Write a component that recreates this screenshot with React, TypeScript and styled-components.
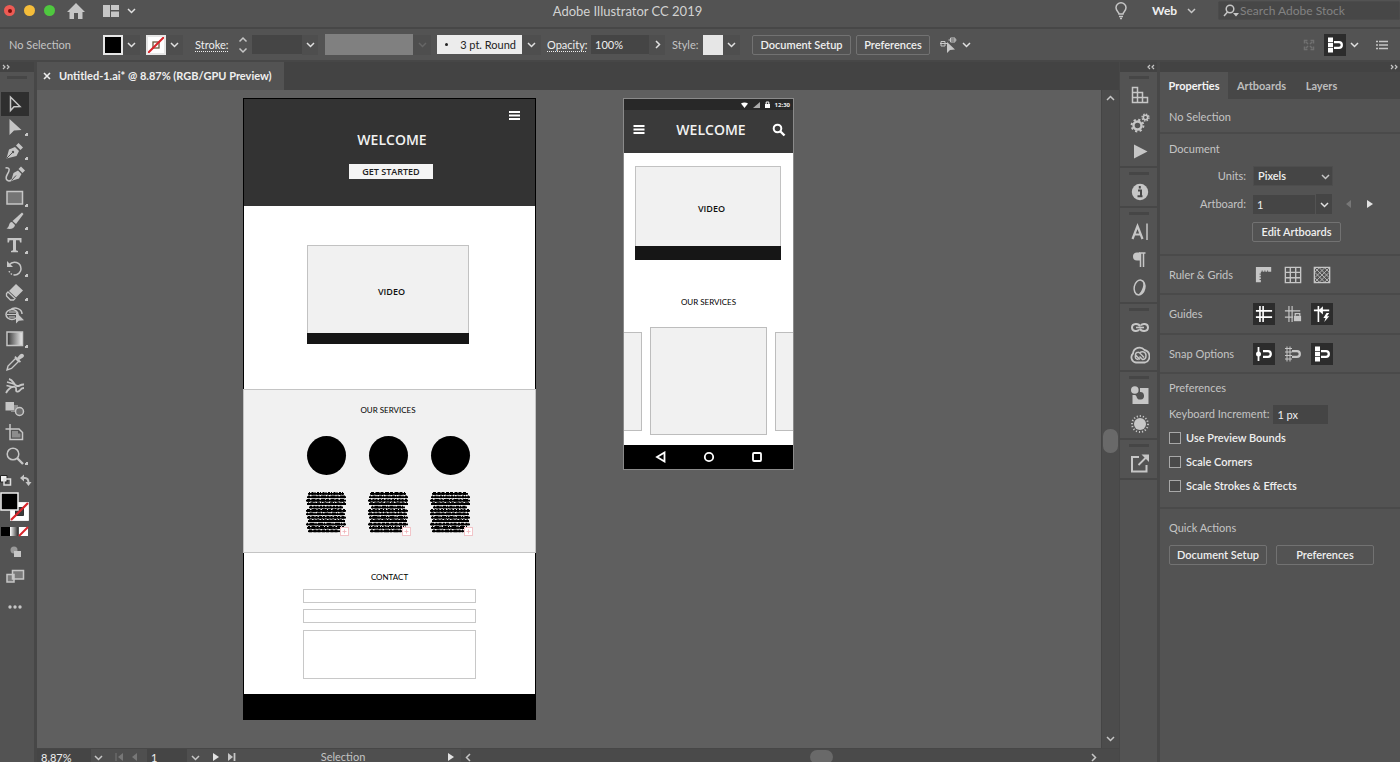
import React from "react";
import styled, { createGlobalStyle, css } from "styled-components";

const c = {
  panel: "#535353",
  dark: "#434343",
  canvas: "#5f5f5f",
  line: "#474747",
  field: "#454545",
  text: "#c4c4c4",
  bright: "#efefef",
  icon: "#c6c6c6",
};

const Global = createGlobalStyle`
  * { box-sizing: border-box; }
  body { margin: 0; background: ${c.panel}; overflow: hidden; }
  body, button, input, select, textarea { font-family: Lato, "Open Sans", sans-serif; font-size: 11px; line-height: 14px; color: ${c.text}; }
  button { padding: 0; border: 0; background: none; display: flex; align-items: center; justify-content: center; }
  input, select, textarea { margin: 0; padding: 0; border: 0; border-radius: 0; outline: 0; appearance: none; }
  h1, h2, h3 { margin: 0; font-weight: 400; }
`;

const Shell = styled.div`
  height: 100vh;
  display: flex;
  flex-direction: column;
  overflow: hidden;
`;

const TitleBar = styled.header`
  height: 29px;
  flex: none;
  display: flex;
  align-items: center;
  padding-bottom: 6px;
  border-bottom: 2px solid ${c.line};
`;
const TitleLeft = styled.div`
  width: 140px;
  display: flex;
  align-items: center;
  padding-left: 4px;
`;
const Light = styled.button<{ $color: string }>`
  width: 11px;
  height: 11px;
  flex: none;
  margin-right: 9px;
  border-radius: 50%;
  background: ${(p) => p.$color};
`;
const Dot = styled.span`
  width: 4px;
  height: 4px;
  border-radius: 50%;
  background: #7a0d0a;
`;
const Home = styled.button`
  margin: 0 16px 0 2px;
`;
const Title = styled.h1`
  flex: 1;
  text-align: center;
  font-size: 13px;
  line-height: 16px;
  color: #d2d2d2;
`;
const TitleRight = styled.div`
  width: 285px;
  display: flex;
  align-items: center;
`;
const Workspace = styled.button`
  margin-left: 25px;
  width: 44px;
  justify-content: space-between;
  font-size: 12px;
  font-weight: 700;
  color: ${c.bright};
`;
const Search = styled.label`
  margin-left: 22px;
  flex: 1;
  height: 19px;
  display: flex;
  align-items: center;
  gap: 1px;
  padding-left: 4px;
  border-radius: 2px;
  background: #474747;
  border: 1px solid #4b4b4b;
  input {
    background: none;
    width: 150px;
    font-size: 12px;
    &::placeholder { color: #828282; opacity: 1; }
  }
`;

const Svg = styled.svg`
  display: block;
  flex: none;
  fill: none;
  stroke: currentColor;
  color: ${c.icon};
`;

const ControlBar = styled.div`
  height: 33px;
  flex: none;
  display: flex;
  align-items: center;
  padding: 0 12px 0 9px;
  border-bottom: 2px solid ${c.line};
`;
const Cell = styled.span<{ $w: number; $link?: boolean }>`
  width: ${(p) => p.$w}px;
  flex: none;
  white-space: nowrap;
  ${(p) => p.$link && css`
    color: ${c.bright};
    text-decoration: underline dotted;
    text-underline-offset: 2px;
  `}
`;
const Swatch = styled.button<{ $bg: string }>`
  width: 20px;
  height: 20px;
  flex: none;
  border: 2px solid #e6e6e6;
  background: ${(p) => p.$bg};
`;
const Drop = styled.button<{ $w?: number; $dim?: boolean; $bg?: string }>`
  width: ${(p) => p.$w || 18}px;
  height: 20px;
  flex: none;
  background: ${(p) => p.$bg || "#4e4e4e"};
  svg { color: ${(p) => (p.$dim ? "#666" : "#e0e0e0")}; }
`;
const Field = styled.input<{ $w: number }>`
  width: ${(p) => p.$w}px;
  height: 19px;
  flex: none;
  padding-left: 4px;
  background: ${c.field};
  color: ${c.bright};
`;
const Profile = styled.span`
  width: 88px;
  height: 21px;
  flex: none;
  background: #808080;
`;
const Brush = styled.button`
  width: 85px;
  height: 19px;
  flex: none;
  background: #ececec;
  color: #222;
  justify-content: space-between;
  padding: 0 6px 0 8px;
`;
const Tip = styled.span`
  width: 3px;
  height: 3px;
  border-radius: 50%;
  background: #222;
`;
const Outline = styled.button<{ $w: number }>`
  width: ${(p) => p.$w}px;
  height: 20px;
  flex: none;
  border: 1px solid #727272;
  border-radius: 2px;
  font-weight: 600;
  color: ${c.bright};
  white-space: nowrap;
`;
const Right = styled.div`
  margin-left: auto;
  display: flex;
  align-items: center;
`;
const Toggle = styled.button<{ $on?: boolean }>`
  width: 22px;
  height: 22px;
  flex: none;
  background: ${(p) => (p.$on ? "#2c2c2c" : "transparent")};
  svg { color: ${(p) => (p.$on ? "#fff" : c.icon)}; }
`;

const Body = styled.div`
  flex: 1;
  min-height: 0;
  display: flex;
`;
const ToolColumn = styled.aside`
  width: 37px;
  flex: none;
  display: flex;
  flex-direction: column;
  background: ${c.panel};
  border-right: 3px solid ${c.line};
`;
const Strip = styled.div<{ $end?: boolean }>`
  height: 10px;
  flex: none;
  display: flex;
  align-items: center;
  justify-content: ${(p) => (p.$end ? "flex-end" : "flex-start")};
  padding: 0 2px;
  background: ${c.dark};
`;
const Grip = styled.div`
  height: 10px;
  width: 20px;
  margin: 0 auto;
  display: flex;
  align-items: center;
  &::before { content: ""; flex: 1; height: 3px; background: #464646; }
`;
const Tools = styled.div`
  height: 376px;
  margin: 10px 0 6px;
  display: grid;
  grid-auto-rows: 1fr;
`;
const Tool = styled.button<{ $on?: boolean }>`
  width: 28px;
  margin-left: 1px;
  background: ${(p) => (p.$on ? "#2f2f2f" : "none")};
`;
const MoreMark = styled.span`
  width: 3px;
  height: 3px;
  align-self: flex-end;
  margin: 0 -3px 3px 0;
  background: linear-gradient(135deg, transparent 30%, #c6c6c6 30%);
`;
const ColorBlock = styled.div`
  width: 33px;
  display: flex;
  flex-direction: column;
  align-items: center;
`;

const Main = styled.main`
  flex: 1;
  min-width: 0;
  display: flex;
  flex-direction: column;
`;
const TabBar = styled.div`
  height: 28px;
  flex: none;
  background: ${c.dark};
  display: flex;
`;
const DocTab = styled.button`
  width: 247px;
  background: ${c.panel};
  color: ${c.bright};
  font-weight: 700;
  justify-content: flex-start;
  gap: 8px;
  padding-left: 6px;
  white-space: nowrap;
`;
const View = styled.div`
  flex: 1;
  min-height: 0;
  display: flex;
`;
const Canvas = styled.div`
  flex: 1;
  position: relative;
  overflow: hidden;
  background: ${c.canvas};
`;
const VScroll = styled.div`
  width: 18px;
  flex: none;
  display: flex;
  flex-direction: column;
  align-items: center;
  padding: 4px 1px 5px;
  background: #4c4c4c;
  border-left: 1px solid #454545;
`;
const Thumb = styled.span<{ $w: number; $h: number }>`
  width: ${(p) => p.$w}px;
  height: ${(p) => p.$h}px;
  border-radius: 7px;
  background: #696969;
`;
const Space = styled.span<{ $n: number }>`
  flex: ${(p) => p.$n};
`;
const StatusBar = styled.footer`
  height: 14px;
  flex: none;
  display: flex;
  overflow: hidden;
  background: #4f4f4f;
  border-top: 1px solid #474747;
  > * { height: 16px; flex: none; }
`;
const StatusCell = styled.span<{ $w: number }>`
  width: ${(p) => p.$w}px;
  display: flex;
  align-items: center;
  justify-content: center;
  gap: 8px;
`;
const HScroll = styled.div`
  && { flex: 1; }
  display: flex;
  align-items: center;
  padding: 0 21px 0 3px;
  background: #4a4a4a;
`;

const Web = styled.section`
  position: absolute;
  left: 206px;
  top: 8px;
  width: 293px;
  background: #fff;
  border: 1px solid #000;
  display: flex;
  flex-direction: column;
  color: #111;
`;
const Hero = styled.div`
  height: 107px;
  background: #333;
  display: flex;
  flex-direction: column;
  align-items: center;
  padding: 12px 15px 0;
`;
const BurgerRight = styled.div`
  align-self: flex-end;
  height: 19px;
`;
const Welcome = styled.h2`
  font: 600 14px/20px "Open Sans", sans-serif;
  color: #f2f2f2;
  margin-left: 5px;
`;
const Start = styled.button`
  width: 84px;
  height: 15px;
  margin: 14px 0 0 3px;
  background: #f4f4f4;
  color: #222;
  font: 600 9px/12px "Open Sans", sans-serif;
`;
const WebVideo = styled.div`
  height: 183px;
  padding: 39px 66px 0 63px;
`;
const Video = styled.div<{ $h: number }>`
  height: ${(p) => p.$h}px;
  border: 1px solid #c2c2c2;
  border-bottom: 0;
  background: #f1f1f1;
  display: flex;
  align-items: center;
  justify-content: center;
  padding: 5px 0 0 7px;
  font: 600 9px/12px "Open Sans", sans-serif;
  color: #111;
`;
const VideoBar = styled.div<{ $h: number }>`
  height: ${(p) => p.$h}px;
  background: #161616;
`;
const Services = styled.div`
  height: 164px;
  margin: 0 -1px;
  background: #f1f1f1;
  border: 1px solid #c4c4c4;
  padding: 14px 66px 0 63px;
`;
const Small = styled.h3`
  font: 400 8px/12px Lato, sans-serif;
  text-align: center;
  color: #000;
`;
const Cols = styled.div`
  display: flex;
  justify-content: space-between;
  margin: 20px -4px 0;
`;
const Col = styled.div`
  display: flex;
  flex-direction: column;
  align-items: center;
  gap: 17px;
`;
const Circle = styled.span`
  width: 39px;
  height: 39px;
  border-radius: 50%;
  background: #000;
`;
const Form = styled.div`
  height: 141px;
  padding: 18px 59px 0;
  display: flex;
  flex-direction: column;
  input, textarea { border: 1px solid #c8c8c8; height: 14px; background: #fff; margin-top: 6px; resize: none; flex: none; }
  textarea { height: 49px; margin-top: 7px; }
`;
const WebFoot = styled.div`
  height: 25px;
  background: #000;
`;

const Phone = styled.section`
  position: absolute;
  left: 586px;
  top: 8px;
  width: 171px;
  border: 1px solid #8a8a8a;
  background: #fff;
  overflow: hidden;
`;
const PhoneStatus = styled.div`
  height: 11px;
  background: #282828;
  display: flex;
  align-items: center;
  justify-content: flex-end;
  gap: 5px;
  padding-right: 3px;
  font: 700 6px/10px "Open Sans", sans-serif;
  color: #eee;
`;
const PhoneHead = styled.div`
  height: 43px;
  background: #3a3a3a;
  display: flex;
  align-items: center;
  justify-content: space-between;
  padding: 0 7px 4px 9px;
`;
const PhoneVideo = styled.div`
  padding: 13px 12px 36px 11px;
`;
const Cards = styled.div`
  display: flex;
  align-items: center;
  justify-content: space-between;
  margin-top: 19px;
`;
const Card = styled.div<{ $w: number; $h: number; $side?: "left" | "right" }>`
  width: ${(p) => p.$w}px;
  height: ${(p) => p.$h}px;
  border: 1px solid #bdbdbd;
  background: #f1f1f1;
  ${(p) => p.$side === "left" && "border-left: 0;"}
  ${(p) => p.$side === "right" && "border-right: 0;"}
`;
const PhoneNav = styled.div`
  margin-top: 10px;
  height: 24px;
  background: #000;
  display: flex;
  align-items: center;
  justify-content: center;
  gap: 36px;
  svg { color: #fff; }
`;

const Dock = styled.aside`
  width: 38px;
  flex: none;
  display: flex;
  flex-direction: column;
  border-left: 1px solid ${c.line};
  background: ${c.panel};
`;
const DockGroup = styled.div`
  border-bottom: 2px solid ${c.line};
  display: flex;
  flex-direction: column;
`;
const DockButton = styled.button`
  height: 28px;
  padding: 0 0 2px 2px;
`;

const Props = styled.aside`
  width: 243px;
  flex: none;
  border-left: 3px solid ${c.line};
  background: ${c.panel};
`;
const PropTabs = styled.div`
  display: flex;
  height: 27px;
  background: #474747;
`;
const PropTab = styled.button<{ $w: number; $on?: boolean }>`
  width: ${(p) => p.$w}px;
  font-weight: 700;
  background: ${(p) => (p.$on ? c.panel : "none")};
  color: ${(p) => (p.$on ? "#f4f4f4" : "#bdbdbd")};
`;
const Section = styled.section<{ $h: number; $last?: boolean }>`
  height: ${(p) => p.$h}px;
  padding: 0 10px 0 9px;
  border-bottom: ${(p) => (p.$last ? 0 : "2px solid #4a4a4a")};
`;
const Row = styled.div<{ $h: number }>`
  height: ${(p) => p.$h}px;
  display: flex;
  align-items: center;
`;
const Label = styled.label`
  width: 77px;
  margin-right: 7px;
  text-align: right;
`;
const PropName = styled.h2`
  width: 84px;
  font-size: 11px;
`;
const SelectWrap = styled.span`
  width: 80px;
  height: 20px;
  display: grid;
  align-items: center;
  background: ${c.field};
  border: 1px solid #4d4d4d;
  > * { grid-area: 1 / 1; }
  select { background: none; color: ${c.bright}; font-weight: 600; padding-left: 4px; }
  svg { justify-self: end; margin-right: 2px; pointer-events: none; }
`;
const Toggles = styled.div`
  display: flex;
  gap: 7px;
`;
const Check = styled.label`
  height: 24px;
  display: flex;
  align-items: center;
  gap: 5px;
  color: ${c.bright};
  font-weight: 600;
  input { width: 12px; height: 12px; border: 1px solid #a8a8a8; background: #4a4a4a; }
`;

const F = { fill: "currentColor", stroke: "none" };

const Chev = ({ dir = "down" }: { dir?: "down" | "up" | "left" | "right" }) => {
  const d = {
    down: "M1 3L4.500 6.500L8 3",
    up: "M1 6L4.500 2.500L8 6",
    left: "M6 1L2.500 4.500L6 8",
    right: "M3 1L6.500 4.500L3 8",
  }[dir];
  return <Svg width="9" height="9" viewBox="0 0 9 9" strokeWidth="1.500"><path d={d} /></Svg>;
};

const Play = ({ left, dim }: { left?: boolean; dim?: boolean }) => (
  <Svg width="6" height="8" viewBox="0 0 6 8"><path d={left ? "M5 0V8L0 4z" : "M0 0V8L6 4z"} fill={dim ? "#777" : "#e2e2e2"} stroke="none" /></Svg>
);

const Stepper = () => (
  <Svg width="10" height="18" viewBox="0 0 10 18" strokeWidth="1.500">
    <path d="M1.500 5.500L5 2L8.500 5.500M1.500 12.500L5 16L8.500 12.500" />
  </Svg>
);

const Double = ({ left }: { left?: boolean }) => (
  <Svg width="8" height="6" viewBox="0 0 8 6" strokeWidth="1.200">
    <path d={left ? "M3 1L1 3L3 5M7 1L5 3L7 5" : "M1 1L3 3L1 5M5 1L7 3L5 5"} />
  </Svg>
);

const Icon = ({ children, size = 20 }: { children: React.ReactNode; size?: number }) => (
  <Svg width={size} height={size} viewBox="0 0 20 20" strokeWidth="1.500">{children}</Svg>
);

const tools: { name: string; more?: boolean; art: React.ReactNode }[] = [
  { name: "Selection", art: <path d="M5.500 3V16.500L9 12.800L15 12.500z" /> },
  { name: "Direct selection", more: true, art: <path d="M4.500 2V18L9 13.500L16.500 13z" {...F} /> },
  { name: "Pen", more: true, art: <><path d="M1.500 17.500L4 8.500L10 6L14 10L11.500 15z" {...F} /><path d="M11 4.500L13.500 2L18 6.500L15.500 9z" {...F} /><path d="M2 17L7.500 11.500" stroke="#535353" strokeWidth="1" /><circle cx="8" cy="11" r="1.200" fill="#535353" stroke="none" /></> },
  { name: "Curvature", art: <><path d="M6 17L8.500 9L13 6.500L16.500 10L14 14.500z" {...F} /><path d="M13.500 5L16 2.500L20 6.500L17.500 9z" {...F} /><path d="M0.500 4C5.500 3 4.500 7 2.500 10C-0.500 15 2 18.500 7 16" strokeWidth="1.500" /><path d="M6.500 16.500L11 11.500" stroke="#535353" strokeWidth="1" /></> },
  { name: "Rectangle", more: true, art: <rect x="2" y="3.500" width="15.500" height="12.500" fill="#757575" /> },
  { name: "Paintbrush", more: true, art: <><path d="M17 1.500L18.500 3L11 13L7.500 10z" {...F} /><path d="M1.500 17.500C5 16 3 11.500 7 11L10 14C9.500 18 5 18.500 1.500 17.500z" {...F} /></> },
  { name: "Type", more: true, art: <path d="M2.500 3H16.500V7.500H15L14.500 5.200H11V15.300L13 16V17.200H6V16L8 15.300V5.200H4.500L4 7.500H2.500z" {...F} /> },
  { name: "Rotate", more: true, art: <><path d="M4 7C8 2 16 4 16 11C16 14 13 17 10 17" /><path d="M2 3V9H8z" {...F} /><path d="M10 17C7 17 4 15 4 12" strokeDasharray="1.500 1.500" /></> },
  { name: "Eraser", more: true, art: <><path d="M11 2L18 8.500L11 15.500L4 9z" {...F} /><path d="M3 10L10 16.500L8.500 18H5.500L1.500 14V11.500z" strokeWidth="1.300" /></> },
  { name: "Shape builder", art: <><ellipse cx="7" cy="9.500" rx="6" ry="5" /><path d="M5 5C10 1 17 4 17 9" /><path d="M2 9.500H13M4 12H10M4 7H12" strokeWidth="1" /><path d="M11 7V18.500L13.800 15.800L19 15.300z" {...F} /></> },
  { name: "Gradient", more: true, art: <><defs><linearGradient id="tg"><stop offset="0" stopColor="#333" /><stop offset="1" stopColor="#eee" /></linearGradient></defs><rect x="2" y="3" width="15.500" height="13.500" fill="url(#tg)" /></> },
  { name: "Eyedropper", art: <><path d="M2 18L3 14L10.500 6.500L13.500 9.500L6.500 16.500z" strokeWidth="1.400" /><path d="M10.500 4L16 9.500L14.800 10.700L9.300 5.200z" {...F} /><path d="M12 6L15 2.500Q17 1 18.500 2.500T18 5.500L14 8z" {...F} /></> },
  { name: "Symbol sprayer", art: <><path d="M1 17C4 12 7 10 10 11C13 12 9 16 13 15.500C16 15 15 12 19 12" strokeWidth="1.800" /><path d="M4 3C9 4 8 9 12 10C15 10.500 15 8 19 8.500" strokeWidth="2" /><path d="M2 6L9 8M1.500 9.500L8 11" strokeWidth="1.500" /></> },
  { name: "Blend", art: <><rect x="0.500" y="3" width="8.500" height="8.500" {...F} /><path d="M9 6H13V13H6V11.500H9z" fill="#8f8f8f" stroke="none" /><circle cx="14.500" cy="12.500" r="4" fill="#6c6c6c" /></> },
  { name: "Artboard", art: <><path d="M5 1V16.500H17.500V9.500L14 6H0.500" /><path d="M7 8H13V10.500H15.500V14.500H7z" fill="#8c8c8c" stroke="none" /></> },
  { name: "Zoom", more: true, art: <><circle cx="8" cy="8" r="5.800" /><path d="M12 12L18 18" strokeWidth="2.400" /></> },
];

const dock: { name: string; art: React.ReactNode }[][] = [
  [
    { name: "Swatches", art: <path d="M2.500 2.500H7.500V17.500H2.500zM2.500 7.500H12.500V17.500M2.500 12.500H17.500V17.500H2.500" /> },
    { name: "Actions settings", art: <><circle cx="7.500" cy="12.500" r="4" strokeWidth="2.400" /><circle cx="7.500" cy="12.500" r="5.900" strokeDasharray="2.200 2.430" strokeWidth="2" /><circle cx="15.500" cy="4.500" r="2.200" strokeWidth="1.600" /><circle cx="15.500" cy="4.500" r="3.500" strokeDasharray="1.500 1.250" strokeWidth="1.300" /></> },
    { name: "Actions", art: <path d="M4 3.500V17.500L17.500 10.500z" {...F} /> },
  ],
  [{ name: "Info", art: <><circle cx="10" cy="11" r="8.200" {...F} /><path d="M8 9.500H11V15M7.500 15.300H12.500M9.800 5V7.500" stroke="#484848" strokeWidth="2" /></> }],
  [
    { name: "Character", art: <><path d="M2.500 18L7.500 5L12.500 18M4.500 13.500H10.500" strokeWidth="2.200" /><path d="M17 2.500V19" strokeWidth="1.500" /></> },
    { name: "Paragraph", art: <><path d="M10 3.500H7A4 4 0 0 0 7 11.500H10z" {...F} /><path d="M10.500 3.500V18M13.500 3.500V18M9 4H15.500" strokeWidth="1.500" /></> },
    { name: "OpenType", art: <><ellipse cx="9.500" cy="10.500" rx="5.300" ry="7.500" transform="rotate(12 9.500 10.500)" strokeWidth="1.500" /><path d="M11 3.500C16 5 12 15 8 18C15 18 18 6 11 3.500z" {...F} /></> },
  ],
  [
    { name: "Links", art: <><path d="M9 12.500C8 14.500 2 15 2 10.500C2 6 9 6 10 9.500M11 8.500C12 6.500 18 6 18 10.500C18 15 11 15 10 11.500" strokeWidth="2" /><path d="M6 10.500H14" strokeWidth="1.600" /></> },
    { name: "Libraries", art: <><path d="M6 17.500A5.300 5.300 0 0 1 3 8.500A6.500 6.500 0 0 1 14.500 5A6.500 6.500 0 0 1 15 17.500z" strokeWidth="1.800" /><path d="M10 14.500L5.500 10A2.500 2.500 0 0 1 8 7.200Q9.500 7 14 12.500M5.500 10Q4.500 14.500 8.500 14.500M9.500 8.500C11 5.500 16 6.500 16 10.500Q16 14.500 12.500 14.500L9.500 11.500" strokeWidth="1.500" /></> },
  ],
  [
    { name: "Color", art: <><circle cx="4.800" cy="5" r="3.800" {...F} /><path d="M10 3H18.500V19H2.500V10H5Q6 10 6.500 11.500A3.800 3.800 0 1 0 10 7z" {...F} /></> },
    { name: "Appearance", art: <><circle cx="10" cy="11" r="6" {...F} /><circle cx="10" cy="11" r="8" strokeDasharray="1.200 1.900" strokeWidth="1.800" /></> },
  ],
  [{ name: "Asset export", art: <><path d="M9 4H2V18.500H16.500V12" strokeWidth="2" /><path d="M8.500 12L16 4.500" strokeWidth="1.800" /><path d="M11.500 1.500H19V9z" {...F} /></> }],
];

const Magnet = ({ kind }: { kind: "point" | "grid" | "pixel" }) => (
  <Icon>
    {kind === "point" && <><path d="M4.500 3V17" strokeWidth="1.800" /><circle cx="4.500" cy="10" r="2.500" {...F} /></>}
    {kind === "grid" && <path d="M4 2.500V17.500M7 2.500V17.500M2 4.500H9M2 8H9M2 11.500H9M2 15H9" strokeWidth="1" />}
    {kind === "pixel" && <path d="M3 2.500H8V7H3zM3 7.700H8V12.300H3zM3 13H8V17.500H3z" {...F} />}
    <path d="M9 7.200H14A2.800 2.800 0 0 1 14 12.800H9" strokeWidth="2.300" />
  </Icon>
);

const NoneArt = () => (
  <Svg width="16" height="16" viewBox="0 0 16 16">
    <rect width="16" height="16" fill="#fff" stroke="none" />
    <rect x="5" y="5" width="6" height="6" stroke="#6b5a3c" strokeWidth="1.300" />
    <path d="M0 16L16 0" stroke="#d8252b" strokeWidth="2" />
  </Svg>
);

const ColorPair = () => (
  <Svg width="33" height="64" viewBox="0 0 33 64">
    <path d="M0.500 1.500H7V8H0.500z" fill="#eee" stroke="#222" /><path d="M4 5H10.500V11H4z" stroke="#ddd" strokeWidth="1.500" />
    <path d="M22 4H25C28 4 28.500 6 28.500 9" strokeWidth="2" /><path d="M20 4L24 0.500V7.500zM25.500 8H31.500L28.500 12z" {...F} />
    <path d="M10.500 28.500H28.500V46.500H10.500z" fill="#fff" stroke="#eee" /><path d="M15.500 33.500H23.500V41.500H15.500z" fill="#3c3c3c" stroke="#333" /><path d="M11 46L28 29" stroke="#d8252b" strokeWidth="2.200" />
    <rect x="1" y="19" width="17" height="17" fill="#000" stroke="#eee" strokeWidth="1.500" />
    <rect x="1" y="53" width="9" height="9" fill="#000" stroke="none" />
    <defs><linearGradient id="cg"><stop offset="0" stopColor="#fff" /><stop offset="1" stopColor="#333" /></linearGradient></defs>
    <rect x="10" y="53" width="8" height="9" fill="url(#cg)" stroke="none" />
    <rect x="19" y="53" width="9" height="9" fill="#fff" stroke="none" /><path d="M19 62L28 53" stroke="#d8252b" strokeWidth="2" />
  </Svg>
);

const greek = [[2, 38], [1, 40], [0, 40], [1, 40], [3, 37], [0, 40], [0, 39], [1, 40], [2, 39], [0, 40], [1, 39], [2, 34]];
const Greeked = ({ seed }: { seed: number }) => (
  <Svg width="46" height="46" viewBox="0 0 46 46">
    <g stroke="#000">
      {greek.map(([a, b], i) => (
        <g key={i}>
          <path d={`M${a + 3} ${1.8 + i * 3.4}H${b + 3}`} strokeWidth="1.800" />
          <path d={`M${a + 4} ${1.5 + i * 3.4}H${b + 2}`} strokeWidth="2.800" strokeDasharray={`${1 + ((i + seed) % 3)} 1.500 ${2 + ((i * 3 + seed) % 4)} 1`} />
        </g>
      ))}
    </g>
    <rect x="37.500" y="35.500" width="8" height="8" fill="#fff" stroke="#f2c4c8" strokeWidth="1" />
    <path d="M39.500 39.500H43.500M41.500 37.500V41.500" stroke="#efb0b5" strokeWidth="0.800" />
  </Svg>
);

const Burger = ({ w }: { w: number }) => (
  <Svg width={w} height="9" viewBox="0 0 11 9"><path d="M0 1H11M0 4.500H11M0 8H11" stroke="#fff" strokeWidth="1.800" /></Svg>
);

export default function App() {
  return (
    <Shell>
      <Global />
      <TitleBar>
        <TitleLeft>
          <Light $color="#ee5b54" aria-label="Close"><Dot /></Light>
          <Light $color="#f5bd3a" aria-label="Minimize" />
          <Light $color="#4fc83f" aria-label="Zoom window" />
          <Home aria-label="Home"><Svg width="20" height="18" viewBox="0 0 20 18"><path d="M10 1L19 10H16.500V17H12V11H8V17H3.500V10H1z" {...F} /></Svg></Home>
          <Svg width="18" height="12" viewBox="0 0 18 12"><path d="M1 0H8V12H1zM9 0H17V5H9zM9 6.500H17V12H9z" {...F} /></Svg>
          <Drop $w={22} $bg="none" aria-label="Arrange"><Chev /></Drop>
        </TitleLeft>
        <Title>Adobe Illustrator CC 2019</Title>
        <TitleRight>
          <Svg width="12" height="18" viewBox="0 0 12 18" strokeWidth="1.500"><path d="M4 12C4 10 1 9 1 5.800A5 5 0 0 1 11 5.800C11 9 8 10 8 12zM4 14.500H8M5 16.500H7" /></Svg>
          <Workspace>Web<Chev /></Workspace>
          <Search>
            <Svg width="16" height="14" viewBox="0 0 16 14" strokeWidth="1.500"><circle cx="7" cy="5" r="3.800" /><path d="M4.500 8L1 12" /><path d="M10 9H16L13 12.500z" {...F} /></Svg>
            <input aria-label="Search" placeholder="Search Adobe Stock" />
          </Search>
        </TitleRight>
      </TitleBar>

      <ControlBar>
        <Cell $w={94}>No Selection</Cell>
        <Swatch $bg="#000" aria-label="Fill" />
        <Drop $w={17} aria-label="Fill options"><Chev /></Drop>
        <Cell $w={6} />
        <Swatch $bg="#fff" aria-label="Stroke color"><NoneArt /></Swatch>
        <Drop $w={17} aria-label="Stroke options"><Chev /></Drop>
        <Cell $w={12} />
        <Cell $w={43} $link>Stroke:</Cell>
        <Stepper />
        <Cell $w={4} />
        <Field $w={50} aria-label="Stroke weight" />
        <Drop $w={16} aria-label="Stroke weight options"><Chev /></Drop>
        <Cell $w={7} />
        <Profile />
        <Drop $w={18} $dim aria-label="Profile options"><Chev /></Drop>
        <Cell $w={6} />
        <Brush><Tip />3 pt. Round</Brush>
        <Drop $w={19} aria-label="Brush options"><Chev /></Drop>
        <Cell $w={6} />
        <Cell $w={44} $link>Opacity:</Cell>
        <Field $w={58} aria-label="Opacity" defaultValue="100%" />
        <Drop $w={16} aria-label="Opacity slider"><Chev dir="right" /></Drop>
        <Cell $w={7} />
        <Cell $w={31}>Style:</Cell>
        <Swatch $bg="#e6e6e6" aria-label="Style" />
        <Drop $w={17} aria-label="Style options"><Chev /></Drop>
        <Cell $w={12} />
        <Outline $w={99}>Document Setup</Outline>
        <Cell $w={5} />
        <Outline $w={74}>Preferences</Outline>
        <Cell $w={10} />
        <Svg width="17" height="16" viewBox="0 0 17 16"><path d="M1 4.500H5V9H1zM10.500 1H15V5H10.500zM0 6.500H8M8.500 3H16.500" /><path d="M7 5V16L10 13L15 12.500z" {...F} /></Svg>
        <Drop $w={18} $bg="none" aria-label="Select similar"><Chev /></Drop>
        <Right>
          <Svg width="12" height="12" viewBox="0 0 12 12" strokeWidth="2"><path d="M1.500 4.500V1.500H4.500M7.500 1.500H10.500V4.500M10.500 7.500V10.500H7.500M4.500 10.500H1.500V7.500M3 3L5 5M9 3L7 5M3 9L5 7M9 9L7 7" stroke="#707070" strokeWidth="1.500" /></Svg>
          <Cell $w={9} />
          <Toggle $on aria-label="Snap to pixel"><Magnet kind="pixel" /></Toggle>
          <Drop $w={16} $bg="none" aria-label="Snap options"><Chev /></Drop>
          <Cell $w={14} />
          <Svg width="12" height="10" viewBox="0 0 12 10"><path d="M0 1.500H2M3 1.500H12M0 5H2M3 5H12M0 8.500H2M3 8.500H12" strokeWidth="1.400" /></Svg>
        </Right>
      </ControlBar>

      <Body>
        <ToolColumn>
          <Strip><Double /></Strip>
          <Grip />
          <Tools>
            {tools.map((t, i) => (
              <Tool key={t.name} $on={i === 0} aria-label={t.name}>
                <Icon>{t.art}</Icon>
                {t.more && <MoreMark />}
              </Tool>
            ))}
          </Tools>
          <ColorBlock>
            <ColorPair />
            <Svg width="30" height="28" viewBox="0 0 30 28"><circle cx="12" cy="12" r="3.500" fill="#999" stroke="none" /><rect x="12" y="13" width="7" height="6" {...F} /></Svg>
            <Svg width="30" height="22" viewBox="0 0 30 22"><path d="M10.500 4.500H21.500V13H10.500zM5 8.500H12V16H5z" fill="#7a7a7a" strokeWidth="1.500" /></Svg>
            <Svg width="30" height="40" viewBox="0 0 30 40"><circle cx="8" cy="19" r="1.700" {...F} /><circle cx="13" cy="19" r="1.700" {...F} /><circle cx="18" cy="19" r="1.700" {...F} /></Svg>
          </ColorBlock>
        </ToolColumn>

        <Main>
          <TabBar>
            <DocTab>
              <Svg width="8" height="8" viewBox="0 0 8 8" strokeWidth="1.600"><path d="M1 1L7 7M7 1L1 7" stroke="#eee" /></Svg>
              Untitled-1.ai* @ 8.87% (RGB/GPU Preview)
            </DocTab>
          </TabBar>
          <View>
            <Canvas>
              <Web>
                <Hero>
                  <BurgerRight><Burger w={11} /></BurgerRight>
                  <Welcome>WELCOME</Welcome>
                  <Start>GET STARTED</Start>
                </Hero>
                <WebVideo><Video $h={88}>VIDEO</Video><VideoBar $h={11} /></WebVideo>
                <Services>
                  <Small>OUR SERVICES</Small>
                  <Cols>
                    {[0, 2, 5].map((s) => <Col key={s}><Circle /><Greeked seed={s} /></Col>)}
                  </Cols>
                </Services>
                <Form>
                  <Small>CONTACT</Small>
                  <input aria-label="Name" />
                  <input aria-label="Email" />
                  <textarea aria-label="Message" />
                </Form>
                <WebFoot />
              </Web>
              <Phone>
                <PhoneStatus>
                  <Svg width="7" height="6" viewBox="0 0 7 6"><path d="M0 1.500C2 0 5 0 7 1.500L3.500 6z" fill="#fff" stroke="none" /></Svg>
                  <Svg width="7" height="6" viewBox="0 0 7 6"><path d="M7 0V6H0z" fill="#aaa" stroke="none" /></Svg>
                  <Svg width="5" height="7" viewBox="0 0 5 7"><path d="M0 3H5V7H0z" fill="#fff" stroke="none" /><path d="M1.200 3V1H3.800V3" stroke="#fff" /></Svg>
                  12:30
                </PhoneStatus>
                <PhoneHead>
                  <Burger w={12} />
                  <Welcome>WELCOME</Welcome>
                  <Svg width="14" height="14" viewBox="0 0 14 14" strokeWidth="2"><circle cx="5.500" cy="5.500" r="3.800" stroke="#fff" /><path d="M8.500 8.500L12.500 12.500" stroke="#fff" strokeWidth="2.400" /></Svg>
                </PhoneHead>
                <PhoneVideo><Video $h={80}>VIDEO</Video><VideoBar $h={14} /></PhoneVideo>
                <Small>OUR SERVICES</Small>
                <Cards>
                  <Card $w={18} $h={99} $side="left" />
                  <Card $w={117} $h={108} />
                  <Card $w={18} $h={99} $side="right" />
                </Cards>
                <PhoneNav>
                  <Svg width="12" height="12" viewBox="0 0 12 12" strokeWidth="1.800"><path d="M9.500 1.500V10.500L2 6z" /></Svg>
                  <Svg width="12" height="12" viewBox="0 0 12 12" strokeWidth="1.800"><circle cx="6" cy="6" r="4.200" /></Svg>
                  <Svg width="12" height="12" viewBox="0 0 12 12" strokeWidth="1.800"><rect x="2" y="2" width="8" height="8" rx="1" /></Svg>
                </PhoneNav>
              </Phone>
            </Canvas>
            <VScroll>
              <Chev dir="up" /><Space $n={325} /><Thumb $w={15} $h={24} /><Space $n={281} /><Chev />
            </VScroll>
          </View>
          <StatusBar>
            <Field $w={54} aria-label="Zoom level" defaultValue="8.87%" />
            <StatusCell $w={14}><Chev /></StatusCell>
            <StatusCell $w={42}>
              <Svg width="9" height="8" viewBox="0 0 9 8"><path d="M1 0V8" stroke="#777" /><path d="M8 0V8L3 4z" fill="#777" stroke="none" /></Svg>
              <Play left dim />
            </StatusCell>
            <Field $w={40} aria-label="Artboard number" defaultValue="1" />
            <StatusCell $w={16}><Chev /></StatusCell>
            <StatusCell $w={42}>
              <Play />
              <Svg width="9" height="8" viewBox="0 0 9 8"><path d="M1 0V8L6 4z" {...F} /><path d="M7.500 0V8" strokeWidth="1.800" /></Svg>
            </StatusCell>
            <StatusCell $w={196}>Selection</StatusCell>
            <StatusCell $w={20}><Play /></StatusCell>
            <HScroll>
              <Chev dir="left" /><Space $n={339} /><Thumb $w={23} $h={14} /><Space $n={257} /><Chev dir="right" />
            </HScroll>
          </StatusBar>
        </Main>

        <Dock>
          <Strip $end><Double left /></Strip>
          {dock.map((g, i) => (
            <DockGroup key={i}>
              <Grip />
              {g.map((d) => <DockButton key={d.name} aria-label={d.name}><Icon>{d.art}</Icon></DockButton>)}
            </DockGroup>
          ))}
        </Dock>

        <Props>
          <Strip $end><Double /></Strip>
          <PropTabs>
            <PropTab $w={68} $on>Properties</PropTab>
            <PropTab $w={67}>Artboards</PropTab>
            <PropTab $w={53}>Layers</PropTab>
          </PropTabs>
          <Section $h={35}><Row $h={35}>No Selection</Row></Section>
          <Section $h={122}>
            <Row $h={30}>Document</Row>
            <Row $h={24}>
              <Label htmlFor="units">Units:</Label>
              <SelectWrap><select id="units"><option>Pixels</option></select><Chev /></SelectWrap>
            </Row>
            <Row $h={32}>
              <Label htmlFor="board">Artboard:</Label>
              <Field id="board" $w={62} defaultValue="1" />
              <Cell $w={1} />
              <Drop $w={16} $bg={c.field} aria-label="Choose artboard"><Chev /></Drop>
              <Cell $w={14} />
              <Play left dim />
              <Cell $w={15} />
              <Play />
            </Row>
            <Row $h={24}><Cell $w={83} /><Outline $w={89}>Edit Artboards</Outline></Row>
          </Section>
          <Section $h={39}>
            <Row $h={37}>
              <PropName>Ruler &amp; Grids</PropName>
              <Toggles>
                <Toggle aria-label="Show rulers"><Icon size={18}><path d="M1 1H18V6.500H6.500V18H1z" {...F} /><path d="M8 7V5M11 7V5M14 7V5M7 9H5M7 12H5M7 15H5" stroke="#535353" strokeWidth="1" /></Icon></Toggle>
                <Toggle aria-label="Show grid"><Icon size={18}><path d="M1.500 1.500H18.500V18.500H1.500zM7 1.500V18.500M13 1.500V18.500M1.500 7H18.500M1.500 13H18.500" /></Icon></Toggle>
                <Toggle aria-label="Show transparency grid"><Icon size={18}><path d="M1.500 1.500H18.500V18.500H1.500z" /><path d="M2 7L7 2M2 13L13 2M2 18L18 2M7 18L18 7M13 18L18 13M2 13L7 18M2 7L13 18M2 2L18 18M7 2L18 13M13 2L18 7" strokeWidth="0.900" /></Icon></Toggle>
              </Toggles>
            </Row>
          </Section>
          <Section $h={40}>
            <Row $h={38}>
              <PropName>Guides</PropName>
              <Toggles>
                <Toggle $on aria-label="Show guides"><Icon size={18}><path d="M5.500 1V19M9 1V19M1 6.500H19M1 13.500H19" strokeWidth="1.800" /></Icon></Toggle>
                <Toggle aria-label="Lock guides"><Icon size={18}><path d="M5.500 1V19M9 1V19M1 6.500H18M1 13.500H10" strokeWidth="1.300" /><rect x="11" y="12" width="8" height="6" {...F} /><path d="M12.500 12V9.500H17.500V12" /></Icon></Toggle>
                <Toggle $on aria-label="Smart guides"><Icon size={18}><path d="M6 1V19M1 6H18" strokeWidth="1.800" /><path d="M6 6L11 1.500V10.500zM15 9L11.500 14.500H14L12.500 19L18 12.500H15.500L18 9z" {...F} /></Icon></Toggle>
              </Toggles>
            </Row>
          </Section>
          <Section $h={39}>
            <Row $h={37}>
              <PropName>Snap Options</PropName>
              <Toggles>
                <Toggle $on aria-label="Snap to point"><Magnet kind="point" /></Toggle>
                <Toggle aria-label="Snap to grid"><Magnet kind="grid" /></Toggle>
                <Toggle $on aria-label="Snap to pixel grid"><Magnet kind="pixel" /></Toggle>
              </Toggles>
            </Row>
          </Section>
          <Section $h={135}>
            <Row $h={28}>Preferences</Row>
            <Row $h={24}>
              <label htmlFor="inc">Keyboard Increment:</label>
              <Cell $w={4} />
              <Field id="inc" $w={55} defaultValue="1 px" />
            </Row>
            <Check><input type="checkbox" />Use Preview Bounds</Check>
            <Check><input type="checkbox" />Scale Corners</Check>
            <Check><input type="checkbox" />Scale Strokes &amp; Effects</Check>
          </Section>
          <Section $h={80} $last>
            <Row $h={38}>Quick Actions</Row>
            <Row $h={16}><Outline $w={98}>Document Setup</Outline><Cell $w={9} /><Outline $w={98}>Preferences</Outline></Row>
          </Section>
        </Props>
      </Body>
    </Shell>
  );
}
